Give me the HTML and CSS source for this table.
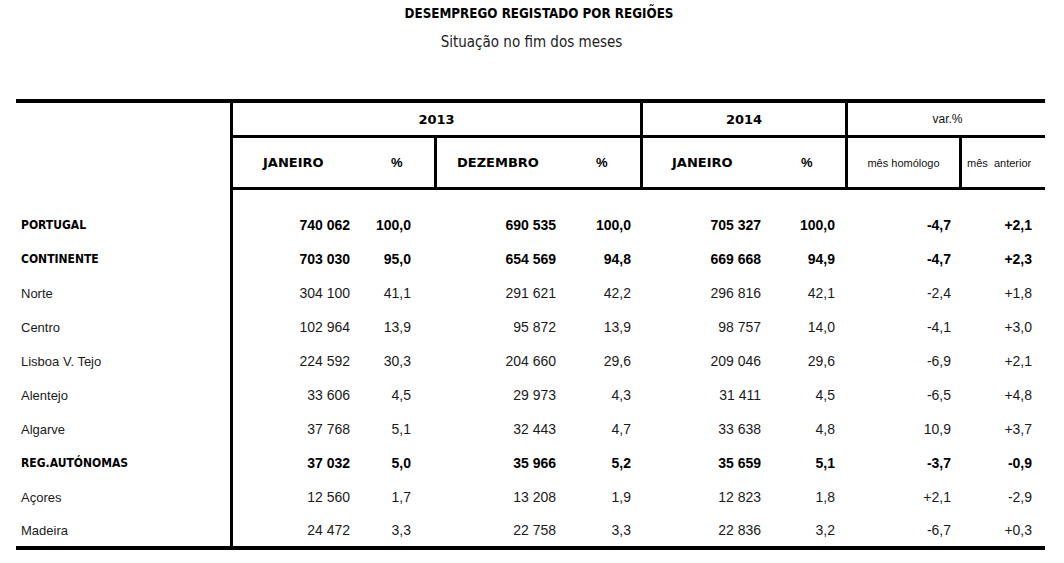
FILE: index.html
```html
<!DOCTYPE html>
<html lang="pt">
<head>
<meta charset="utf-8">
<title>Desemprego registado por regiões</title>
<link rel="stylesheet" href="styles.css">
</head>
<body>
<header class="heading">
  <h1 class="title">DESEMPREGO REGISTADO POR REGIÕES</h1>
  <p class="subtitle">Situação no fim dos meses</p>
</header>
<table class="stats">
  <colgroup>
    <col class="c-label">
    <col class="c-v1"><col class="c-p1">
    <col class="c-v2"><col class="c-p2">
    <col class="c-v3"><col class="c-p3">
    <col class="c-h"><col class="c-a">
  </colgroup>
  <thead>
    <tr class="row-year">
      <th class="label-head" rowspan="2"></th>
      <th class="year sep" colspan="4">2013</th>
      <th class="year sep" colspan="2">2014</th>
      <th class="var" colspan="2">var.%</th>
    </tr>
    <tr class="row-month">
      <th class="month m1">JANEIRO</th>
      <th class="pct-h p1 sep">%</th>
      <th class="month m2">DEZEMBRO</th>
      <th class="pct-h p2 sep">%</th>
      <th class="month m3">JANEIRO</th>
      <th class="pct-h p3 sep">%</th>
      <th class="vsub hom sep">mês homólogo</th>
      <th class="vsub ant">mês&nbsp;&nbsp;anterior</th>
    </tr>
  </thead>
  <tbody>
    <tr class="first strong">
      <th class="label">PORTUGAL</th>
      <td class="v1">740 062</td><td class="p1">100,0</td>
      <td class="v2">690 535</td><td class="p2">100,0</td>
      <td class="v3">705 327</td><td class="p3">100,0</td>
      <td class="h">-4,7</td><td class="a">+2,1</td>
    </tr>
    <tr class="strong">
      <th class="label">CONTINENTE</th>
      <td class="v1">703 030</td><td class="p1">95,0</td>
      <td class="v2">654 569</td><td class="p2">94,8</td>
      <td class="v3">669 668</td><td class="p3">94,9</td>
      <td class="h">-4,7</td><td class="a">+2,3</td>
    </tr>
    <tr>
      <th class="label">Norte</th>
      <td class="v1">304 100</td><td class="p1">41,1</td>
      <td class="v2">291 621</td><td class="p2">42,2</td>
      <td class="v3">296 816</td><td class="p3">42,1</td>
      <td class="h">-2,4</td><td class="a">+1,8</td>
    </tr>
    <tr>
      <th class="label">Centro</th>
      <td class="v1">102 964</td><td class="p1">13,9</td>
      <td class="v2">95 872</td><td class="p2">13,9</td>
      <td class="v3">98 757</td><td class="p3">14,0</td>
      <td class="h">-4,1</td><td class="a">+3,0</td>
    </tr>
    <tr>
      <th class="label">Lisboa V. Tejo</th>
      <td class="v1">224 592</td><td class="p1">30,3</td>
      <td class="v2">204 660</td><td class="p2">29,6</td>
      <td class="v3">209 046</td><td class="p3">29,6</td>
      <td class="h">-6,9</td><td class="a">+2,1</td>
    </tr>
    <tr>
      <th class="label">Alentejo</th>
      <td class="v1">33 606</td><td class="p1">4,5</td>
      <td class="v2">29 973</td><td class="p2">4,3</td>
      <td class="v3">31 411</td><td class="p3">4,5</td>
      <td class="h">-6,5</td><td class="a">+4,8</td>
    </tr>
    <tr>
      <th class="label">Algarve</th>
      <td class="v1">37 768</td><td class="p1">5,1</td>
      <td class="v2">32 443</td><td class="p2">4,7</td>
      <td class="v3">33 638</td><td class="p3">4,8</td>
      <td class="h">10,9</td><td class="a">+3,7</td>
    </tr>
    <tr class="strong">
      <th class="label">REG.AUTÓNOMAS</th>
      <td class="v1">37 032</td><td class="p1">5,0</td>
      <td class="v2">35 966</td><td class="p2">5,2</td>
      <td class="v3">35 659</td><td class="p3">5,1</td>
      <td class="h">-3,7</td><td class="a">-0,9</td>
    </tr>
    <tr>
      <th class="label">Açores</th>
      <td class="v1">12 560</td><td class="p1">1,7</td>
      <td class="v2">13 208</td><td class="p2">1,9</td>
      <td class="v3">12 823</td><td class="p3">1,8</td>
      <td class="h">+2,1</td><td class="a">-2,9</td>
    </tr>
    <tr class="last">
      <th class="label">Madeira</th>
      <td class="v1">24 472</td><td class="p1">3,3</td>
      <td class="v2">22 758</td><td class="p2">3,3</td>
      <td class="v3">22 836</td><td class="p3">3,2</td>
      <td class="h">-6,7</td><td class="a">+0,3</td>
    </tr>
  </tbody>
</table>
</body>
</html>
```

FILE: styles.css
```css
html, body {
  margin: 0;
  padding: 0;
  background: #fff;
  color: #111;
  font-family: "Liberation Sans", Arial, sans-serif;
}

.heading {
  text-align: center;
  padding-top: 4px;
  width: 1064px;
  padding-left: 14px;
  box-sizing: border-box;
}

.title {
  margin: 0;
  font-family: "DejaVu Sans Condensed", "DejaVu Sans", sans-serif;
  font-stretch: condensed;
  font-weight: bold;
  font-size: 13.3px;
  line-height: 20px;
  color: #000;
}

.subtitle {
  margin: 8px 15px 0 0;
  font-family: "DejaVu Sans Condensed", "DejaVu Sans", sans-serif;
  font-stretch: condensed;
  font-size: 15px;
  line-height: 20px;
  color: #222;
}

.stats {
  margin: 47px 0 0 16px;
  border-collapse: separate;
  border-spacing: 0;
  table-layout: fixed;
  width: 1029px;
  border-top: 4px solid #000;
  border-bottom: 4px solid #000;
}

.c-label { width: 217px; }
.c-v1 { width: 127px; }
.c-p1 { width: 77px; }
.c-v2 { width: 133px; }
.c-p2 { width: 73px; }
.c-v3 { width: 132px; }
.c-p3 { width: 73px; }
.c-h { width: 114px; }
.c-a { width: 83px; }

.stats th, .stats td {
  padding: 0;
  box-sizing: border-box;
  white-space: nowrap;
}

.stats .label-head {
  border-right: 3px solid #000;
}

.row-year th {
  height: 35px;
  border-bottom: 3px solid #000;
  font-family: "DejaVu Sans", Verdana, sans-serif;
  font-weight: bold;
  font-size: 13px;
  color: #000;
  text-align: center;
  vertical-align: middle;
}

.stats .row-year .label-head {
  border-bottom: 0;
}

.stats .row-year .var {
  font-family: "Liberation Sans", Arial, sans-serif;
  font-weight: normal;
  font-size: 12px;
  color: #111;
  padding-left: 2px;
}

.stats .sep {
  border-right: 3px solid #000;
}

.row-month th {
  height: 52px;
  border-bottom: 3px solid #000;
  vertical-align: middle;
  font-family: "DejaVu Sans", Verdana, sans-serif;
  font-weight: bold;
  font-size: 13px;
  color: #000;
}

.stats .month { text-align: left; }
.stats .m1 { padding-left: 30px; }
.stats .m2 { padding-left: 20px; }
.stats .m3 { padding-left: 29px; }

.stats .pct-h {
  text-align: left;
  font-family: "Liberation Sans", Arial, sans-serif;
  font-size: 13px;
}
.stats .row-month .p1 { padding-left: 31px; }
.stats .row-month .p2 { padding-left: 26px; }
.stats .row-month .p3 { padding-left: 26px; }

.stats .row-month .vsub {
  font-family: "Liberation Sans", Arial, sans-serif;
  font-weight: normal;
  font-size: 11px;
  color: #111;
}
.stats .row-month .hom { text-align: center; }
.stats .row-month .ant { text-align: left; padding-left: 5px; }

tbody tr { height: 34px; }
tbody tr.first { height: 52px; }
.stats tbody tr.first th, .stats tbody tr.first td { padding-top: 18px; }
tbody tr.last { height: 32px; }

tbody th, tbody td {
  vertical-align: middle;
  font-size: 14px;
  color: #1a1a1a;
  text-align: right;
}

.stats tbody .label {
  text-align: left;
  padding-left: 5px;
  font-weight: normal;
  font-size: 13px;
  border-right: 3px solid #000;
}

.stats tbody .strong .label {
  font-family: "DejaVu Sans Condensed", "DejaVu Sans", sans-serif;
  font-stretch: condensed;
  font-size: 12px;
}

.stats tbody .strong th, .stats tbody .strong td {
  font-weight: bold;
  color: #000;
}

.stats tbody .v1 { padding-right: 10px; }
.stats tbody .p1 { padding-right: 26px; }
.stats tbody .v2 { padding-right: 14px; }
.stats tbody .p2 { padding-right: 12px; }
.stats tbody .v3 { padding-right: 14px; }
.stats tbody .p3 { padding-right: 13px; }
.stats tbody .h { padding-right: 11px; }
.stats tbody .a { padding-right: 13px; }
```
